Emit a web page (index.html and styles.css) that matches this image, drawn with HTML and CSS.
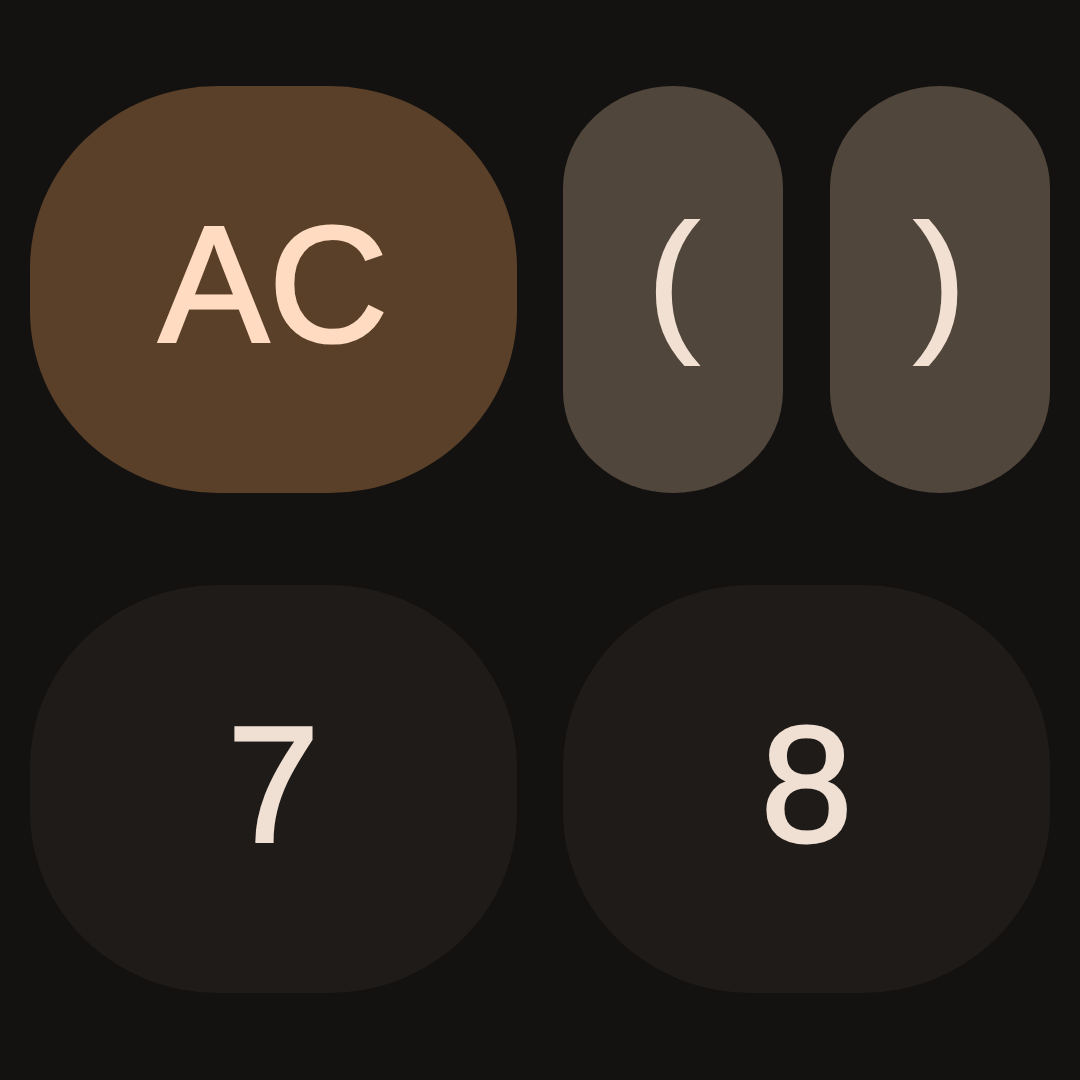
FILE: index.html
```html
<!DOCTYPE html>
<html lang="en">
<head>
<meta charset="utf-8">
<title>Calculator keypad</title>
<link rel="stylesheet" href="styles.css">
</head>
<body>
<main class="keypad">
  <button class="key key-wide key-clear">AC</button>
  <button class="key key-paren">(</button>
  <button class="key key-paren">)</button>
  <button class="key key-wide key-num">7</button>
  <button class="key key-wide key-num">8</button>
</main>
</body>
</html>
```
FILE: styles.css
```css
html, body {
  margin: 0;
  padding: 0;
  background: #131211;
  width: 1080px;
  height: 1080px;
  overflow: hidden;
}

.keypad {
  display: grid;
  grid-template-columns: repeat(4, 220px);
  grid-template-rows: 407px 408px;
  column-gap: 46.67px;
  row-gap: 92px;
  padding: 86px 30px 0 30px;
}

.key {
  border: none;
  margin: 0;
  padding: 0 0 10px 0;
  font-family: "Liberation Sans", Arial, sans-serif;
  font-size: 165px;
  line-height: 1;
  -webkit-text-stroke: 3px currentColor;
  display: flex;
  align-items: center;
  justify-content: center;
  cursor: pointer;
}

.key-wide {
  grid-column: span 2;
  border-radius: 188px / 182px;
}

.key-clear {
  background: #5b4029;
  color: #ffdcc1;
}

.key-paren {
  background: #51463b;
  color: #f2e0d3;
  border-radius: 110px / 102px;
  font-size: 156px;
  padding-bottom: 22px;
  -webkit-text-stroke: 2px currentColor;
}

.key-num {
  background: #1f1b18;
  color: #f0dfd3;
}
```
